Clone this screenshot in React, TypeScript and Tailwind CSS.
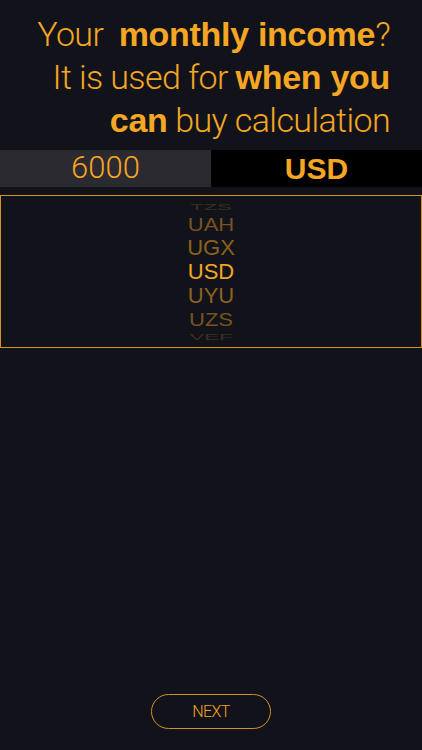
import React from 'react';

const wheel = [
  { code: 'TZS', h: 'h-[12px]', cls: 'scale-y-[0.45] text-[#f5a623]/20' },
  { code: 'UAH', h: 'h-[23px]', cls: 'scale-y-[0.85] text-[#f5a623]/45' },
  { code: 'UGX', h: 'h-[24px]', cls: 'scale-y-[0.97] text-[#f5a623]/55' },
  { code: 'USD', h: 'h-[24px]', cls: 'text-[#f5a623]' },
  { code: 'UYU', h: 'h-[24px]', cls: 'scale-y-[0.97] text-[#f5a623]/55' },
  { code: 'UZS', h: 'h-[23px]', cls: 'scale-y-[0.85] text-[#f5a623]/45' },
  { code: 'VEF', h: 'h-[12px]', cls: 'scale-y-[0.45] text-[#f5a623]/20' },
];

export default function App() {
  return (
    <div className="flex h-[750px] w-full flex-col bg-[#12131a] text-[#f5a623] [font-family:Roboto,sans-serif]">
      <div className="pt-[13px] pr-[32px] text-right text-[34px] leading-[43px] font-light tracking-[-0.6px]">
        <p>
          Your&nbsp; <b className="font-bold tracking-[-0.3px] [font-family:'Liberation_Sans',Arial,sans-serif]">monthly income</b>?
        </p>
        <p>
          It is used for <b className="font-bold tracking-[-0.3px] [font-family:'Liberation_Sans',Arial,sans-serif]">when you</b>
        </p>
        <p>
          <b className="font-bold tracking-[-0.3px] [font-family:'Liberation_Sans',Arial,sans-serif]">can</b> buy calculation
        </p>
      </div>

      <div className="mt-[8px] flex h-[37px]">
        <div className="flex flex-1 items-center justify-center bg-[#2a2a30] text-[31px] font-light">
          6000
        </div>
        <div className="flex flex-1 items-center justify-center bg-black text-[30px] font-bold [font-family:'Liberation_Sans',Arial,sans-serif]">
          USD
        </div>
      </div>

      <div className="mt-[8px] flex h-[153px] flex-col items-center justify-center overflow-hidden border border-[#d88f1e] [font-family:'Liberation_Sans',Arial,sans-serif]">
        {wheel.map((w) => (
          <div
            key={w.code}
            className={`flex ${w.h} items-center justify-center text-[22px] leading-[24px] ${w.cls}`}
          >
            {w.code}
          </div>
        ))}
      </div>

      <div className="flex-1" />

      <div className="flex justify-center pb-[21px]">
        <button className="flex h-[35px] w-[120px] items-center justify-center rounded-full border border-[#d88f1e] text-[16px] font-light tracking-[-0.6px]">
          NEXT
        </button>
      </div>
    </div>
  );
}
